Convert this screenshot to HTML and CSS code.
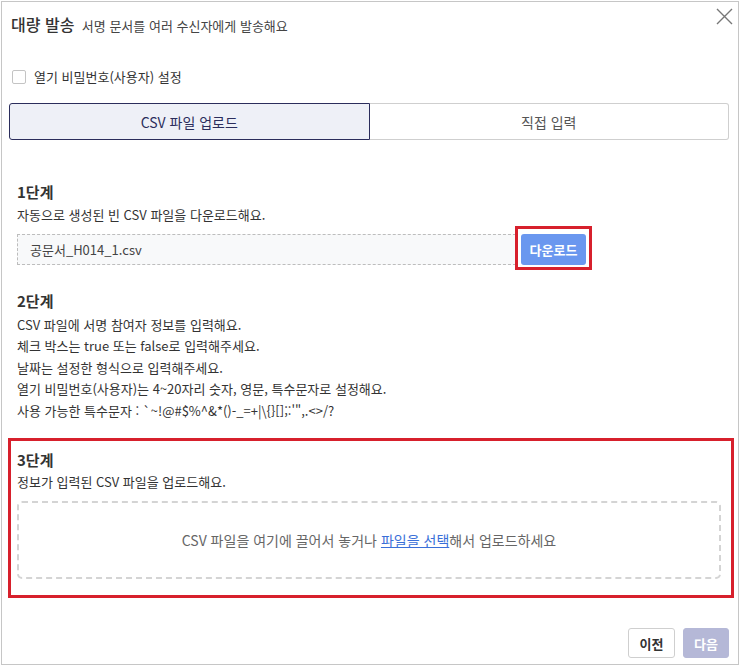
FILE: index.html
```html
<!DOCTYPE html>
<html lang="ko">
<head>
    <meta charset="UTF-8">
    <meta name="viewport" content="width=device-width, initial-scale=1.0">
    <title>대량 발송</title>
    <link rel="stylesheet" href="styles.css">
</head>
<body>
    <div class="modal">
        <div class="modal-header">
            <h1>대량 발송 <span class="subtitle">서명 문서를 여러 수신자에게 발송해요</span></h1>
            <button class="close-btn" aria-label="닫기">
                <svg width="17" height="17" viewBox="0 0 17 17">
                    <path d="M1 1 L16 16 M16 1 L1 16" stroke="#777" stroke-width="1.4" fill="none"/>
                </svg>
            </button>
        </div>

        <div class="modal-body">
            <label class="check-row">
                <span class="checkbox"></span>
                열기 비밀번호(사용자) 설정
            </label>

            <div class="tabs">
                <div class="tab active">CSV 파일 업로드</div>
                <div class="tab">직접 입력</div>
            </div>

            <div class="step step-1">
                <h2>1단계</h2>
                <p>자동으로 생성된 빈 CSV 파일을 다운로드해요.</p>
                <div class="file-row">
                    <div class="file-name">공문서_H014_1.csv</div>
                    <div class="mark">
                        <button class="btn-download">다운로드</button>
                    </div>
                </div>
            </div>

            <div class="step step-2">
                <h2>2단계</h2>
                <p>CSV 파일에 서명 참여자 정보를 입력해요.</p>
                <p>체크 박스는 true 또는 false로 입력해주세요.</p>
                <p>날짜는 설정한 형식으로 입력해주세요.</p>
                <p>열기 비밀번호(사용자)는 4~20자리 숫자, 영문, 특수문자로 설정해요.</p>
                <p>사용 가능한 특수문자 : `~!@#$%^&amp;*()-_=+|\{}[];:'",.&lt;&gt;/?</p>
            </div>

            <div class="step step-3">
                <h2>3단계</h2>
                <p>정보가 입력된 CSV 파일을 업로드해요.</p>
                <div class="dropzone">
                    CSV 파일을 여기에 끌어서 놓거나 <a href="#">파일을 선택</a>해서 업로드하세요
                </div>
            </div>
        </div>

        <div class="modal-footer">
            <button class="btn btn-prev">이전</button>
            <button class="btn btn-next">다음</button>
        </div>
    </div>
</body>
</html>
```

FILE: styles.css
```css
* {
    box-sizing: border-box;
}
body {
    margin: 0;
    padding: 1px;
    background-color: white;
    font-family: "Noto Sans CJK KR", "Noto Sans", sans-serif;
    font-size: 13px;
    color: #333;
}
.modal {
    width: 738px;
    height: 664px;
    border: 1px solid #c6c6c6;
    display: flex;
    flex-direction: column;
}
.modal-header {
    display: flex;
    justify-content: space-between;
    align-items: flex-start;
    padding: 6px 5px 0 9px;
}
h1 {
    margin: 4px 0 0;
    font-size: 16px;
    font-weight: 500;
    color: #333;
}
.subtitle {
    margin-left: 3px;
    font-size: 13px;
    font-weight: 400;
    color: #444;
}
.close-btn {
    border: none;
    background: none;
    padding: 0;
    width: 17px;
    height: 17px;
}
.modal-body {
    flex: 1;
    padding: 0 9px 0 7px;
}
.check-row {
    display: flex;
    align-items: center;
    gap: 8px;
    margin: 31px 0 0 3px;
    color: #333;
}
.checkbox {
    width: 14px;
    height: 14px;
    border: 1px solid #c4c4c4;
    border-radius: 2px;
    background: white;
}
.tabs {
    display: flex;
    margin-top: 17px;
    height: 37px;
}
.tab {
    flex: 1;
    display: flex;
    align-items: center;
    justify-content: center;
    border: 1px solid #cfcfcf;
    border-left: none;
    border-radius: 0 3px 3px 0;
    font-size: 14px;
    color: #555;
}
.tab.active {
    border: 1px solid #2b2d5c;
    border-radius: 3px 0 0 3px;
    background-color: #eef0f7;
    color: #2b2d5c;
}
.step {
    padding: 0 8px;
}
h2 {
    margin: 0;
    font-size: 15px;
    font-weight: 700;
    color: #333;
    line-height: 22px;
}
.step p {
    margin: 0;
    line-height: 21.5px;
}
.step-1 {
    margin-top: 41px;
}
.step-1 p {
    margin-top: 1px;
}
.file-row {
    display: flex;
    align-items: flex-start;
}
.file-name {
    width: 499px;
    height: 31px;
    margin-top: 8px;
    display: flex;
    align-items: center;
    padding-left: 12px;
    border: 1px dashed #bdbdbd;
    background-color: #f8f9fa;
    color: #444;
}
.mark {
    margin-left: -1px;
    padding: 5px 3px 2px 3px;
    border: 3px solid #d7202c;
}
.btn-download {
    display: block;
    width: 65px;
    height: 31px;
    border: none;
    border-radius: 3px;
    background-color: #6a97ef;
    color: white;
    font-family: inherit;
    font-size: 13px;
    font-weight: 700;
}
.step-2 {
    margin-top: 20px;
}
.step-2 h2 {
    margin-bottom: 2px;
}
.step-3 {
    margin: 17px -5px 0 -1px;
    padding: 8px 10px 16px 6px;
    border: 3px solid #d7202c;
}
.dropzone {
    margin-top: 8px;
    height: 78px;
    display: flex;
    align-items: center;
    justify-content: center;
    border: 2px dashed #d4d4d4;
    border-radius: 5px;
    color: #666;
    font-size: 14px;
}
.dropzone a {
    margin-left: 4px;
    color: #3a6fd8;
}
.modal-footer {
    display: flex;
    justify-content: flex-end;
    gap: 8px;
    padding: 0 9px 6px 0;
}
.btn {
    height: 30px;
    border-radius: 3px;
    font-family: inherit;
    font-size: 13px;
    font-weight: 700;
}
.btn-prev {
    width: 47px;
    border: 1px solid #cfcfcf;
    background-color: white;
    color: #333;
}
.btn-next {
    width: 46px;
    border: 1px solid #b5b8d7;
    background-color: #b5b8d7;
    color: white;
}
```
